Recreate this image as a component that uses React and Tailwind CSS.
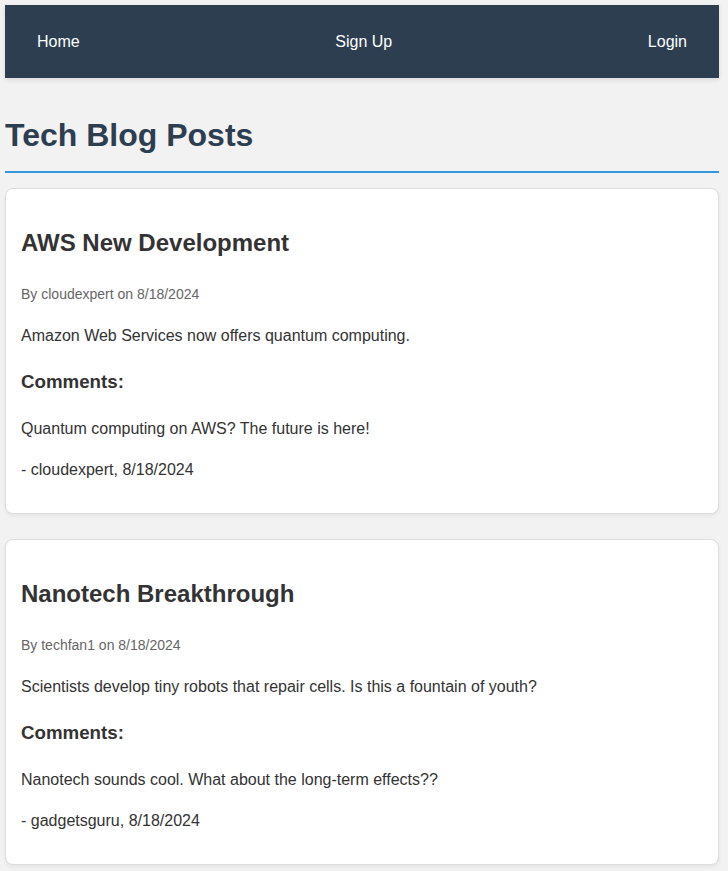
const posts = [
  {
    title: "AWS New Development",
    author: "cloudexpert",
    date: "8/18/2024",
    body: "Amazon Web Services now offers quantum computing.",
    comments: [
      { text: "Quantum computing on AWS? The future is here!", author: "cloudexpert", date: "8/18/2024" },
    ],
  },
  {
    title: "Nanotech Breakthrough",
    author: "techfan1",
    date: "8/18/2024",
    body: "Scientists develop tiny robots that repair cells. Is this a fountain of youth?",
    comments: [
      { text: "Nanotech sounds cool. What about the long-term effects??", author: "gadgetsguru", date: "8/18/2024" },
    ],
  },
];

function PostCard({ post }) {
  return (
    <div className="mb-[25px] rounded-lg border border-[#dddddd] bg-white px-[15px] pt-[35px] pb-[31px] shadow-[0_2px_4px_rgba(0,0,0,0.06)]">
      <h2 className="text-[24px] font-bold leading-[38.4px] text-[#333333]">{post.title}</h2>
      <p className="mt-[20px] text-[14px] leading-[22.4px] text-[#666666]">
        By {post.author} on {post.date}
      </p>
      <p className="mt-[18px] text-[16px] leading-[25.6px] text-[#333333]">{post.body}</p>
      <h3 className="mt-[18.72px] text-[18.72px] font-bold leading-[30px] text-[#333333]">Comments:</h3>
      {post.comments.map((c, i) => (
        <div key={i}>
          <p className="mt-[18.72px] text-[16px] leading-[25.6px] text-[#333333]">{c.text}</p>
          <p className="mt-[15px] text-[16px] leading-[25.6px] text-[#333333]">
            - {c.author}, {c.date}
          </p>
        </div>
      ))}
    </div>
  );
}

export default function App() {
  return (
    <div className="min-h-screen bg-[#f2f2f2] pt-[5px] font-['Liberation_Sans',Arial,sans-serif]">
      <div className="ml-[5px] w-[714px]">
        {/* ── Navbar ── */}
        <nav className="flex h-[73px] items-center justify-between bg-[#2c3e50] px-8 text-[16px] text-white shadow-[0_2px_5px_rgba(0,0,0,0.1)]">
          <a href="#">Home</a>
          <a href="#">Sign Up</a>
          <a href="#">Login</a>
        </nav>

        {/* ── Header ── */}
        <h1 className="mt-[32px] mb-[15px] border-b-2 border-[#3498db] pb-[10px] text-[32px] font-bold leading-[51.2px] text-[#2c3e50]">
          Tech Blog Posts
        </h1>

        {posts.map((p) => (
          <PostCard key={p.title} post={p} />
        ))}
      </div>
    </div>
  );
}
